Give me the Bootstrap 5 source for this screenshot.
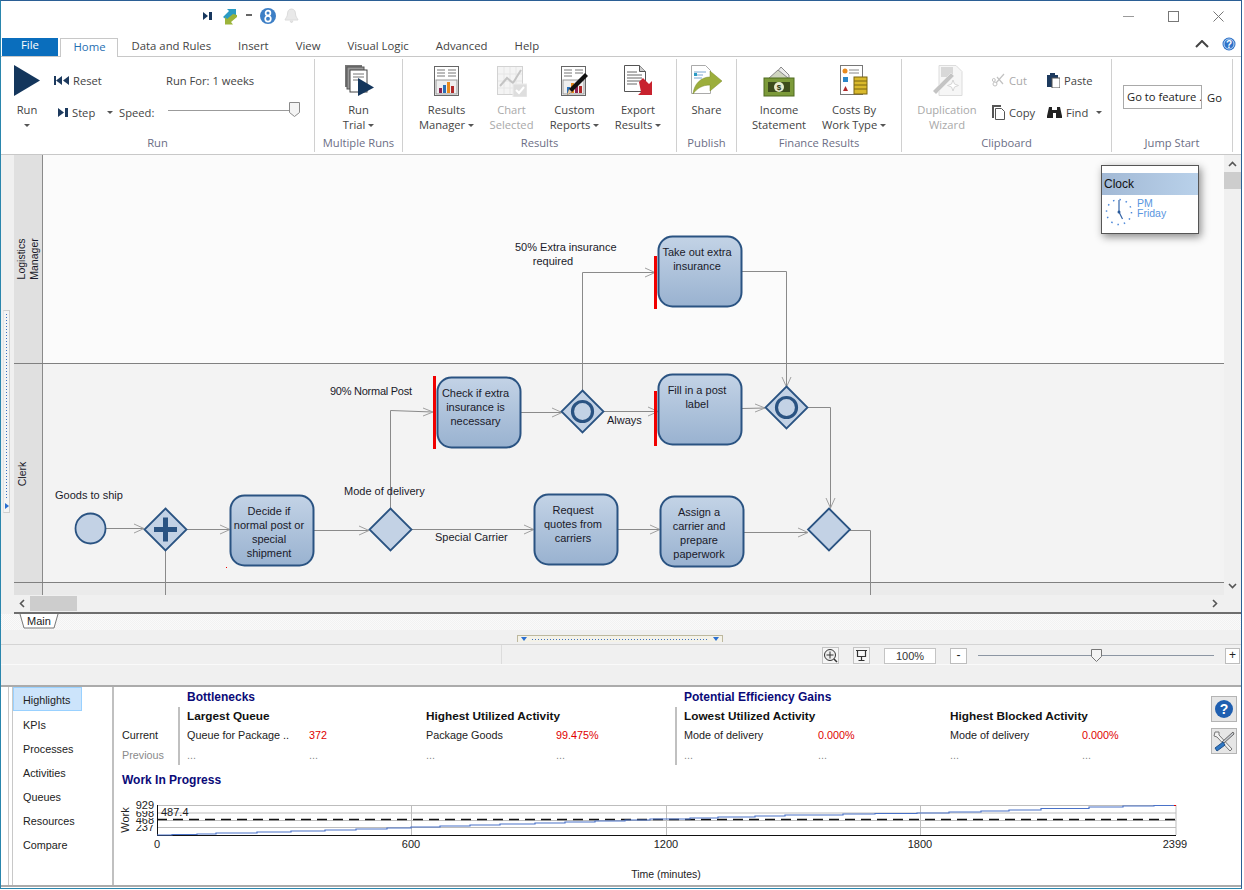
<!DOCTYPE html>
<html lang="en">
<head>
<meta charset="UTF-8">
<meta name="viewport" content="width=device-width, initial-scale=1.0">
<title>Process Simulator - Home</title>
<link href="https://cdn.jsdelivr.net/npm/bootstrap@5.3.6/dist/css/bootstrap.min.css" rel="stylesheet">
<style>
html,body{margin:0;background:#fff;overflow:hidden}
.app{width:1242px;height:889px;border-top:1px solid #2b5f95;border-left:1px solid #2a86ad;border-right:1px solid #2b5f95;border-bottom:1px solid #2a86ad;background:#fff;font:11.2px/15px "Open Sans",sans-serif;color:#444}
.titlebar{height:37px;padding:0 0 7px 201px}
.qa-item{margin-right:8px}
.win-ctl{margin-left:auto;padding-right:17px;gap:34px}
.tabrow{height:19px;border-bottom:1px solid #c8c8c8;padding-left:1px;font-size:11.35px}
.tab-file{width:56px;height:18px;background:#0a6ebd;color:#fff;text-align:center;line-height:13px;margin-right:2px}
.tab-item{padding:0 13.5px;line-height:15px;height:19px;white-space:nowrap}
.tab-on{color:#1f6fb2;background:#fff;border:1px solid #c8c8c8;border-bottom:0;padding:0 12.5px;width:58px}
.tab-right{margin-left:auto;padding:0 5px 7px 0;gap:13px;height:18px}
.ribbon{height:98px;border-bottom:1px solid #c8c8c8}
.rb-group{position:relative;flex:none;display:flex;flex-direction:column;height:93px;margin-top:2px;border-right:1px solid #d0d0d0}
.rb-body{flex:1;display:flex;padding-top:5px;min-height:0}
.rb-label{height:18px;line-height:18px;text-align:center;color:#6c6e85}
.w-run{width:314px}.w-multi{width:88px}.w-res{width:274px}.w-pub{width:60px}.w-fin{width:165px}.w-clip{width:210px}.w-jump{width:121px}
.big-btn{flex:none;display:flex;flex-direction:column;align-items:center;text-align:center;white-space:nowrap}
.big-btn svg{display:block;height:33px;margin-bottom:5px}
.bw-run{width:34px;margin-left:9px;margin-right:10px}.bw-full{width:100%}
.bw-63{width:63px;margin-left:12px}.bw-67{width:67px}.bw-59{width:59px}.bw-68{width:68px}
.bw-84{width:84px}.bw-66{width:66px}.bw-90{width:90px}
.faded{color:#a9a9a9}
.rb-caret{display:inline-block;width:0;height:0;border-left:3px solid transparent;border-right:3px solid transparent;border-top:3px solid #555;vertical-align:2px}
.rb-rows{display:flex;flex-direction:column}
.rb-row{height:32px;display:flex;align-items:center;white-space:nowrap}
.cell-a{width:112px}.cell-b{width:65px}.cell-c{width:49px}
.speed-track{position:relative;width:132px;height:1px;background:#9b9b9b;margin-top:-4px}
.speed-thumb{position:absolute;right:0;top:-8px}
.small-grid{display:grid;grid-template-columns:55px 62px;grid-auto-rows:32px;white-space:nowrap}
.small-btn{display:flex;align-items:center;gap:4px}
.small-btn svg{flex:none}
.jump-box{margin:21px 0 0 11px;display:flex;align-items:center;align-self:flex-start;color:#222}
.jump-input{width:79px;height:24px;border:1px solid #a9a9a9;line-height:22px;padding-left:3px;margin-right:5px;white-space:nowrap;overflow:hidden}
.mid-row{height:459px}
.gutter{width:13px;background:#f0f0f0;position:relative}
.gutter-grip{position:absolute;left:2px;top:155px;width:7px;height:203px;border:1px solid #cfcfcf;border-left-color:#e4e4e4;background:#f4f4f4;display:flex;flex-direction:column;align-items:center;justify-content:space-between;padding:3px 0}
.grip-vdots{width:1px;flex:1;margin:0 0 3px;background:repeating-linear-gradient(180deg,#3a6fc0 0 1px,transparent 1px 3px)}
.grip-rtri{width:0;height:0;border-top:3px solid transparent;border-bottom:3px solid transparent;border-left:4px solid #2a6fd0}
.canvas-wrap{position:relative;width:1227px}
.canvas-top{display:flex;height:440px}
.canvas-svg{display:block;width:1210px;height:440px;font-family:"Liberation Sans",sans-serif;font-size:11px;fill:#1a1a2a}
.vbar{width:17px;background:#f0f0f0;position:relative}
.vbar-thumb{position:absolute;left:0;top:17px;width:17px;height:17px;background:#cdcdcd}
.sb-arrow{position:absolute}
.sb-up{left:4px;top:6px}
.sb-down{left:4px;top:428px}
.sb-left{left:5px;top:4px}
.sb-right{left:1198px;top:4px}
.hbar{height:19px;background:#f0f0f0;border-bottom:2px solid #6e6e6e;position:relative}
.hbar-thumb{position:absolute;left:16px;top:1px;width:47px;height:15px;background:#cdcdcd}
.clock-win{position:absolute;left:1087px;top:10px;width:98px;height:69px;background:#fff;border:1px solid #555;box-shadow:2px 3px 8px rgba(0,0,0,.45);padding-top:7px}
.clock-head{height:22px;background:linear-gradient(90deg,#a2b9d5,#b9d1ea);font:12px/22px "Liberation Sans",sans-serif;color:#111;padding-left:2px}
.clock-body{display:flex;gap:4px;padding:3px 0 0 3px;color:#5b96e0;font:10.5px/10px "Liberation Sans",sans-serif}
.sheet-strip{height:16px;padding-left:13px;background:repeating-conic-gradient(#f2f2f2 0 25%,#fafafa 0 50%) 0 0/2px 2px}
.sheet-tab{display:block}
.grip-row{height:14px;background:#f0f0f0;display:flex;justify-content:center;align-items:flex-end;padding-right:2px}
.grip-box{width:206px;height:7px;border:1px solid #bdb89e;border-bottom:0;background:#f4f2e8;display:flex;justify-content:space-between;align-items:center;padding:0 3px;margin-bottom:2px}
.grip-dots{flex:1;height:1px;margin:0 5px;background:repeating-linear-gradient(90deg,#3a6fc0 0 1px,transparent 1px 3px)}
.grip-tri{width:0;height:0;border-left:3px solid transparent;border-right:3px solid transparent;border-top:4px solid #2a6fd0}
.zoom-row{height:21px;background:#f0f0f0;border-top:1px solid #d4d4d4;border-bottom:1px solid #fafafa;justify-content:flex-end;padding:2px 1px 0 0}
.zoom-sep{position:absolute;left:500px;top:0;height:19px;border-left:1px solid #dcdcdc}
.zoom-btn{width:17px;height:16px;border:1px solid #bdbdbd;background:#fff;text-align:center;font:12px/13px "Liberation Sans",sans-serif;color:#222;flex:none}
.zoom-plus{width:15px}
.zoom-icon{width:17px;height:17px;border:1px solid #c4c4c4;background:#f6f6f6;flex:none;display:flex;align-items:center;justify-content:center}
.zoom-pct{width:52px;height:16px;background:#fff;border:1px solid #c4c4c4;text-align:center;font:11px/14px "Liberation Sans",sans-serif;color:#333;flex:none}
.zoom-track{position:relative;width:236px;height:1px;background:#8c96a3;flex:none}
.zoom-thumb{position:absolute;left:113px;top:-6px}
.zg{margin-left:14px}
.zs{margin-left:11px}
.gap-row{height:20px;background:#f0f0f0}
.bottom-panel{height:202px;border-top:2px solid #ababab;border-bottom:2px solid #ababab;font:10.8px/14px "Liberation Sans",sans-serif;color:#222;padding-left:11px;background:#fff}
.side-nav{width:102px;border-right:2px solid #c0c0c0;border-left:1px solid #c8c8c8;box-shadow:-3px 0 0 #fff,-4px 0 0 #c8c8c8;flex:none}
.side-item{height:24px;line-height:24px;padding-left:10px}
.side-on{width:69px;background:#cce4fb;border:1px solid #99d1ff;padding-left:9px;line-height:25px;margin-bottom:2px}
.hl-area{position:relative;flex:1}
.hl-grid{display:grid;grid-template-columns:56px 131px 117px 130px 119px 143px 132px 132px 100px;grid-template-rows:20px 19px 20px 19px;padding-left:8px;white-space:nowrap}
.hl-title{color:#0a0a78;font-weight:700;line-height:20px;font-size:12px;padding-left:9px}
.hl-bold{font-weight:700;color:#111;font-size:11.8px;line-height:19px}
.hl-cell{line-height:19px}
.hl-sep{border-left:2px solid #c0c0c0;padding-left:7px}
.hl-val{color:#e00000}
.hl-prev{color:#8a8a8a}
.wip-title{padding-left:8px;margin-top:6px;color:#0a0a78;font-weight:700;font-size:12px;line-height:18px}
.chart-svg{position:absolute;left:0;top:99px;width:1110px;height:100px;font-family:"Liberation Sans",sans-serif;font-size:11px;fill:#222}
.side-tools{position:absolute;right:4px;top:9px;display:flex;flex-direction:column;gap:6px}
.tool-btn{width:26px;height:26px;border:1px solid #b4b4b4;background:#e6e6e6;display:flex;align-items:center;justify-content:center}
</style>
</head>
<body>
<div class="app d-flex flex-column">

  <!-- title bar -->
  <div class="titlebar d-flex align-items-center">
    <svg class="qa-item" width="12" height="12" viewBox="0 0 12 12"><path d="M1 2v8l5-4zM7 2h3v8H7z" fill="#17375e"/></svg>
    <svg class="qa-item" width="16" height="17" viewBox="0 0 16 17"><path d="M1 9l6-6-2-2h9v8l-2-2-6 6z" fill="#2a9bc4"/><path d="M15 7v2l-6 5 2 2.500H3V9l2 2 6-5z" fill="#9cb43a"/></svg>
    <svg class="qa-item" width="6" height="4" viewBox="0 0 6 4"><path d="M0 0h6v2H0z" fill="#666"/></svg>
    <svg class="qa-item" width="16" height="16" viewBox="0 0 16 16"><circle cx="8" cy="8" r="8" fill="#3d7fc6"/><circle cx="8" cy="5" r="2.400" fill="none" stroke="#fff" stroke-width="1.700"/><circle cx="8" cy="10.800" r="2.800" fill="none" stroke="#fff" stroke-width="1.700"/></svg>
    <svg width="15" height="16" viewBox="0 0 15 16"><path d="M7.500 1c3 0 4 2.500 4 5 0 3 2 4 2.500 6H1c.5-2 2.500-3 2.500-6 0-2.500 1-5 4-5zM6 13h3l-1.500 2z" fill="#e9e9e9" stroke="#dcdcdc"/></svg>
    <div class="win-ctl d-flex align-items-center">
      <svg width="11" height="11" viewBox="0 0 11 11"><path d="M0 5.500h11" stroke="#9a9a9a"/></svg>
      <svg width="11" height="11" viewBox="0 0 11 11"><rect x=".5" y=".5" width="10" height="10" fill="none" stroke="#777"/></svg>
      <svg width="11" height="11" viewBox="0 0 11 11"><path d="M.5.500l10 10M10.500.500l-10 10" stroke="#777"/></svg>
    </div>
  </div>

  <!-- tabs -->
  <div class="tabrow d-flex">
    <div class="tab-file">File</div>
    <div class="tab-item tab-on">Home</div>
    <div class="tab-item">Data and Rules</div>
    <div class="tab-item">Insert</div>
    <div class="tab-item">View</div>
    <div class="tab-item">Visual Logic</div>
    <div class="tab-item">Advanced</div>
    <div class="tab-item">Help</div>
    <div class="tab-right d-flex align-items-center">
      <svg width="14" height="8" viewBox="0 0 14 8"><path d="M1 7l6-6 6 6" fill="none" stroke="#444" stroke-width="2"/></svg>
      <svg width="14" height="14" viewBox="0 0 14 14"><circle cx="7" cy="7" r="6.500" fill="#2e72c8"/><circle cx="7" cy="7" r="5" fill="none" stroke="#bcd6f4"/><text x="7" y="10.500" text-anchor="middle" font-family="Liberation Sans" font-weight="700" font-size="10" fill="#fff">?</text></svg>
    </div>
  </div>

  <!-- ribbon -->
  <div class="ribbon d-flex">
    <div class="rb-group w-run">
      <div class="rb-body">
        <div class="big-btn bw-run">
          <svg width="28" height="33" viewBox="0 0 28 33"><path d="M1 1l26 15.500L1 32z" fill="#14365c"/></svg>
          <div>Run</div><div><span class="rb-caret"></span></div>
        </div>
        <div class="rb-rows">
          <div class="rb-row">
            <div class="cell-a d-flex align-items-center gap-1">
              <svg width="15" height="9" viewBox="0 0 15 9"><path d="M0 0h2v9H0zM8 0v9L2 4.500zM15 0v9L9 4.500z" fill="#1d3a5e"/></svg><span>Reset</span>
            </div>
            <div>Run For: 1 weeks</div>
          </div>
          <div class="rb-row">
            <div class="cell-b d-flex align-items-center gap-1 ps-1">
              <svg width="10" height="9" viewBox="0 0 10 9"><path d="M0 0l6 4.500L0 9zM7 0h3v9H7z" fill="#1d3a5e"/></svg><span>Step</span><span class="rb-caret ms-2"></span>
            </div>
            <div class="cell-c">Speed:</div>
            <div class="speed-track">
              <svg class="speed-thumb" width="11" height="15" viewBox="0 0 11 15"><path d="M.5.500h10v10l-5 4-5-4z" fill="#f4f4f4" stroke="#8a8a8a"/></svg>
            </div>
          </div>
        </div>
      </div>
      <div class="rb-label">Run</div>
    </div>

    <div class="rb-group w-multi">
      <div class="rb-body">
        <div class="big-btn bw-full">
          <svg width="30" height="33" viewBox="0 0 30 33">
            <rect x="1" y="1" width="17" height="22" fill="#777"/><rect x="3" y="3" width="17" height="22" fill="#999" stroke="#555"/><rect x="6" y="6" width="17" height="22" fill="#fff" stroke="#444"/>
            <path d="M9 10h11M9 13h11M9 16h7" stroke="#777"/><path d="M14 14l16 9.500L14 32z" fill="#14365c"/>
          </svg>
          <div>Run</div><div>Trial <span class="rb-caret"></span></div>
        </div>
      </div>
      <div class="rb-label">Multiple Runs</div>
    </div>

    <div class="rb-group w-res">
      <div class="rb-body">
        <div class="big-btn bw-63">
          <svg width="26" height="33" viewBox="0 0 26 33">
            <rect x=".5" y="2.500" width="24" height="29" fill="#fff" stroke="#666"/><path d="M3 6h8M14 6h8M3 9h8M14 9h8M3 12h8M14 12h8" stroke="#777"/>
            <rect x="2" y="16" width="21" height="14" fill="#efefef" stroke="#999"/>
            <rect x="5" y="24" width="3" height="5" fill="#8d2252"/><rect x="9" y="21" width="3" height="8" fill="#2a70b8"/><rect x="13" y="18" width="3" height="11" fill="#e88a1e"/><rect x="17" y="22" width="3" height="7" fill="#b02a2a"/>
          </svg>
          <div>Results</div><div>Manager <span class="rb-caret"></span></div>
        </div>
        <div class="big-btn bw-67 faded">
          <svg width="30" height="33" viewBox="0 0 30 33">
            <rect x=".5" y="2.500" width="25" height="28" fill="#f4f4f4" stroke="#d2d2d2"/><path d="M7 3v27M13 3v27M19 3v27M1 10h24M1 17h24M1 24h24" stroke="#e6e6e6"/>
            <path d="M3 22l7-8 6 5 8-13" fill="none" stroke="#c4c4c4" stroke-width="2"/><rect x="16" y="20" width="14" height="13" fill="#dedede" stroke="#ececec"/><path d="M19 26l3 3 5-6" fill="none" stroke="#fff" stroke-width="2"/>
          </svg>
          <div>Chart</div><div>Selected</div>
        </div>
        <div class="big-btn bw-59">
          <svg width="28" height="33" viewBox="0 0 28 33">
            <rect x=".5" y="2.500" width="24" height="29" fill="#fff" stroke="#666"/><path d="M3 6h8M14 6h8M3 9h8M14 9h8M3 12h8" stroke="#777"/>
            <rect x="2" y="16" width="21" height="14" fill="#efefef" stroke="#999"/>
            <rect x="6" y="23" width="3" height="6" fill="#2a70b8"/><rect x="10" y="19" width="3" height="10" fill="#e88a1e"/><rect x="14" y="21" width="3" height="8" fill="#8d2252"/><rect x="18" y="22" width="3" height="7" fill="#b02a2a"/>
            <path d="M6 31l2-6L24 9l3 3-16 16z" fill="#111"/><path d="M6 31l2-6 3 3z" fill="#e8c9a0"/>
          </svg>
          <div>Custom</div><div>Reports <span class="rb-caret"></span></div>
        </div>
        <div class="big-btn bw-68">
          <svg width="28" height="33" viewBox="0 0 28 33">
            <path d="M.5 1.500h15l6 6v20H.5z" fill="#fff" stroke="#555"/><path d="M15.500 1.500v6h6" fill="#ccc" stroke="#555"/><path d="M3 8h10M3 11h15M3 14h15M3 17h15M3 20h10" stroke="#666"/>
            <path d="M14 19l4-4 6 6 3-3v14H13l3-3z" fill="#c8222e" transform="translate(1 -1)"/>
          </svg>
          <div>Export</div><div>Results <span class="rb-caret"></span></div>
        </div>
      </div>
      <div class="rb-label">Results</div>
    </div>

    <div class="rb-group w-pub">
      <div class="rb-body">
        <div class="big-btn bw-full">
          <svg width="32" height="33" viewBox="0 0 32 33">
            <path d="M.5 1.500h14l5 5v23H.5z" fill="#fff" stroke="#aaa"/><path d="M3 8h12M3 11h9M3 14h8" stroke="#7aa6d0"/><rect x="3" y="9" width="3" height="3" fill="#2a9bc4"/>
            <path d="M2 30c1-10 8-17 17-17V7l12 10-12 10v-6C12 21 6 24 2 30z" fill="#9cae3c" stroke="#7a8a2a" stroke-width=".5"/>
          </svg>
          <div>Share</div>
        </div>
      </div>
      <div class="rb-label">Publish</div>
    </div>

    <div class="rb-group w-fin">
      <div class="rb-body">
        <div class="big-btn bw-84">
          <svg width="32" height="33" viewBox="0 0 32 33">
            <path d="M8 15L18 3l8 8v6z" fill="#ececec" stroke="#888"/><path d="M5 15l10-9 10 8v3z" fill="#cfd5c0" stroke="#888"/>
            <rect x="1" y="14" width="30" height="18" fill="#7c9a3a" stroke="#4f6a1e"/><rect x="5" y="18" width="22" height="10" fill="#3d4d1c"/><circle cx="16" cy="23" r="5" fill="#e7eccf"/><text x="16" y="26" text-anchor="middle" font-family="Liberation Sans" font-weight="700" font-size="8" fill="#2a3510">$</text>
          </svg>
          <div>Income</div><div>Statement</div>
        </div>
        <div class="big-btn bw-66">
          <svg width="28" height="33" viewBox="0 0 28 33">
            <rect x=".5" y="1.500" width="22" height="29" fill="#fff" stroke="#777"/><circle cx="5" cy="7" r="2.500" fill="#e88a1e"/><path d="M9 6h10M9 9h10" stroke="#888"/><rect x="3" y="13" width="5" height="5" fill="#2a86c8"/><path d="M3 27l2.500-5 2.500 5z" fill="#b02a2a"/>
            <rect x="14" y="13" width="13" height="17" fill="#d9b92c" stroke="#7a6510"/><path d="M14 17h13M14 21h13M14 25h13" stroke="#7a6510"/>
          </svg>
          <div>Costs By</div><div>Work Type <span class="rb-caret"></span></div>
        </div>
      </div>
      <div class="rb-label">Finance Results</div>
    </div>

    <div class="rb-group w-clip">
      <div class="rb-body">
        <div class="big-btn bw-90 faded">
          <svg width="32" height="33" viewBox="0 0 32 33">
            <path d="M8 1.500h17l6 6v24H8z" fill="#f6f6f6" stroke="#dcdcdc"/><rect x="10" y="3" width="12" height="10" fill="#d8d8d8"/>
            <path d="M2 27L20 9l3 3L5 30z" fill="#c4c4c4" stroke="#e2e2e2"/><path d="M22 16l1.500 4 4 1.500-4 1.500-1.500 4-1.500-4-4-1.500 4-1.500z" fill="#fff" stroke="#d6d6d6"/>
          </svg>
          <div>Duplication</div><div>Wizard</div>
        </div>
        <div class="small-grid">
          <div class="small-btn faded">
            <svg width="13" height="14" viewBox="0 0 13 14"><path d="M12 1L4 10M11 11L5 4" stroke="#c2c2c2" stroke-width="1.200" fill="none"/><circle cx="3" cy="11" r="2" fill="none" stroke="#c2c2c2"/><circle cx="1.800" cy="7" r="1.500" fill="none" stroke="#c2c2c2"/></svg>
            <span>Cut</span>
          </div>
          <div class="small-btn">
            <svg width="13" height="15" viewBox="0 0 13 15"><rect x="0" y="2" width="11" height="12" fill="#1d3a5e"/><rect x="3" y="0" width="5" height="4" fill="#1d3a5e"/><rect x="5" y="5" width="8" height="10" fill="#fff" stroke="#555"/></svg>
            <span>Paste</span>
          </div>
          <div class="small-btn">
            <svg width="13" height="15" viewBox="0 0 13 15"><path d="M0 0h9v2H2v11H0z" fill="#555"/><path d="M3.500 3.500h6l3 3v8h-9z" fill="#fff" stroke="#555"/></svg>
            <span>Copy</span>
          </div>
          <div class="small-btn">
            <svg width="15" height="12" viewBox="0 0 15 12"><path d="M2 1h3v3h5V1h3l2 9v2H9V7H6v5H0v-2z" fill="#222"/></svg>
            <span>Find</span><span class="rb-caret ms-1"></span>
          </div>
        </div>
      </div>
      <div class="rb-label">Clipboard</div>
    </div>

    <div class="rb-group w-jump">
      <div class="rb-body">
        <div class="jump-box">
          <div class="jump-input">Go to feature .</div><span>Go</span>
        </div>
      </div>
      <div class="rb-label">Jump Start</div>
    </div>
  </div>

  <!-- process canvas -->
  <div class="mid-row d-flex">
    <div class="gutter">
      <div class="gutter-grip"><span class="grip-vdots"></span><span class="grip-rtri"></span></div>
    </div>
    <div class="canvas-wrap">
      <div class="canvas-top">
        <svg class="canvas-svg" viewBox="14 155 1210 440">
          <defs>
            <linearGradient id="taskFill" x1="0" y1="0" x2="0" y2="1"><stop offset="0" stop-color="#c3d3e6"/><stop offset="1" stop-color="#99b2d0"/></linearGradient>
          </defs>
          <!-- lanes -->
          <rect x="14" y="155" width="1210" height="208" fill="#fbfbfb"/>
          <rect x="14" y="364" width="1210" height="218" fill="#f3f3f3"/>
          <rect x="14" y="583" width="1210" height="12" fill="#ebebeb"/>
          <rect x="14" y="155" width="29" height="440" fill="#e0e0e0"/>
          <path d="M13.500 155v440M42.500 155v440" stroke="#8a8a8a" fill="none"/>
          <path d="M14 363.500h1210M14 582.500h1210" stroke="#808080" fill="none"/>
          <text transform="translate(25 259) rotate(-90)" text-anchor="middle" font-size="10.500">Logistics</text>
          <text transform="translate(38 259) rotate(-90)" text-anchor="middle" font-size="10.500">Manager</text>
          <text transform="translate(26 474) rotate(-90)" text-anchor="middle" font-size="10.500">Clerk</text>
          <!-- edges -->
          <g fill="none" stroke="#8a8a8a" stroke-width="1">
            <path d="M106 528.500h38M165.500 551v44M187 529.500h43M314 530.500h55M390.500 508.500V410.500l42 1.500M411.500 529.500h122M521 412.500h41M582.500 390V272.500h71.500M603.500 411.500h54M742 271.500h44.500V387M742 408.500l23-.5M807 407.500h23.500V508.500M618 529.500h42M744 532.500h64M850 530.500h20.500V595"/>
          </g>
          <g fill="none" stroke="#a0a0a0" stroke-width="1">
            <path d="M134 524l10 4.500-10 4.500M220 525l10 4.500-10 4.500M359 526l10 4.500-10 4.500M423 408l10 4-10 4M524 525l10 4.500-10 4.500M552 408l10 4.500-10 4.500M645 268l10 4.500-10 4.500M648 407l10 4.500-10 4.500M782 377l4.500 10 4.500-10M755 404l10 4-10 4M826 498l4.500 10 4.500-10M650 525l10 4.500-10 4.500M798 528l10 4.500-10 4.500"/>
          </g>
          <!-- red bars -->
          <g fill="#f00000">
            <rect x="654" y="256" width="3" height="53"/>
            <rect x="433" y="376" width="3" height="73"/>
            <rect x="654" y="391" width="3" height="55"/>
            <rect x="226" y="567" width="1" height="1"/>
          </g>
          <!-- tasks -->
          <g fill="url(#taskFill)" stroke="#2a5382" stroke-width="2">
            <rect x="658.500" y="236.500" width="83" height="70" rx="14"/>
            <rect x="437.500" y="377.500" width="83" height="70" rx="14"/>
            <rect x="658.500" y="374.500" width="83" height="70" rx="14"/>
            <rect x="230.500" y="495.500" width="83" height="70" rx="14"/>
            <rect x="534.500" y="494.500" width="83" height="70" rx="14"/>
            <rect x="660.500" y="496.500" width="83" height="70" rx="14"/>
          </g>
          <!-- events and gateways -->
          <g fill="#c3d2e5" stroke="#2a5382" stroke-width="1.800">
            <circle cx="90.500" cy="528.500" r="15"/>
            <path d="M165.500 508.500l21 21-21 21-21-21z"/>
            <path d="M390.500 508.500l21 21-21 21-21-21z"/>
            <path d="M582.500 390.500l21 21-21 21-21-21z"/>
            <path d="M786.500 386.500l21 21-21 21-21-21z"/>
            <path d="M829 508.500l21 21-21 21-21-21z"/>
          </g>
          <path d="M165.500 517.500v24M154 529.500h23" stroke="#2a5382" stroke-width="5" fill="none"/>
          <circle cx="582.500" cy="411.500" r="10" fill="none" stroke="#2a5382" stroke-width="3.200"/>
          <circle cx="786.500" cy="407.500" r="10" fill="none" stroke="#2a5382" stroke-width="3.200"/>
          <!-- task text -->
          <g text-anchor="middle">
            <text x="697" y="256">Take out extra</text><text x="697" y="270">insurance</text>
            <text x="475.500" y="397">Check if extra</text><text x="475.500" y="411">insurance is</text><text x="475.500" y="425">necessary</text>
            <text x="697" y="394">Fill in a post</text><text x="697" y="408">label</text>
            <text x="269" y="515">Decide if</text><text x="269" y="529">normal post or</text><text x="269" y="543">special</text><text x="269" y="557">shipment</text>
            <text x="573" y="514">Request</text><text x="573" y="528">quotes from</text><text x="573" y="542">carriers</text>
            <text x="699" y="516">Assign a</text><text x="699" y="530">carrier and</text><text x="699" y="544">prepare</text><text x="699" y="558">paperwork</text>
            <text x="553" y="265">required</text>
          </g>
          <text x="515" y="251">50% Extra insurance</text>
          <text x="330" y="395" textLength="82">90% Normal Post</text>
          <text x="55" y="499">Goods to ship</text>
          <text x="344" y="495">Mode of delivery</text>
          <text x="435" y="541">Special Carrier</text>
          <text x="607" y="424">Always</text>
        </svg>
        <div class="vbar">
          <svg class="sb-arrow sb-up" width="9" height="6" viewBox="0 0 9 6"><path d="M1 5l3.500-3.500L8 5" fill="none" stroke="#555" stroke-width="1.600"/></svg>
          <div class="vbar-thumb"></div>
          <svg class="sb-arrow sb-down" width="9" height="6" viewBox="0 0 9 6"><path d="M1 1l3.500 3.500L8 1" fill="none" stroke="#555" stroke-width="1.600"/></svg>
        </div>
      </div>
      <div class="hbar">
        <svg class="sb-arrow sb-left" width="6" height="9" viewBox="0 0 6 9"><path d="M5 1L1.500 4.500 5 8" fill="none" stroke="#555" stroke-width="1.600"/></svg>
        <div class="hbar-thumb"></div>
        <svg class="sb-arrow sb-right" width="6" height="9" viewBox="0 0 6 9"><path d="M1 1l3.500 3.500L1 8" fill="none" stroke="#555" stroke-width="1.600"/></svg>
      </div>
      <div class="clock-win">
        <div class="clock-head">Clock</div>
        <div class="clock-body">
          <svg width="28" height="28" viewBox="0 0 28 28">
            <circle cx="14" cy="14" r="12.500" fill="none" stroke="#4a86d8" stroke-width="1.500" stroke-dasharray="1.500 5.050"/>
            <path d="M14 14V2M14 14l3.500 7" stroke="#3566a8" stroke-width="1.200" fill="none"/><circle cx="14" cy="14" r="1.500" fill="#2a5a9a"/>
          </svg>
          <div>PM<br>Friday</div>
        </div>
      </div>
    </div>
  </div>

  <!-- sheet tabs -->
  <div class="sheet-strip">
    <svg class="sheet-tab" width="48" height="16" viewBox="0 0 48 16"><path d="M6 0l4 14h30l4-14" fill="#fff" stroke="#777"/><text x="25" y="11" text-anchor="middle" font-family="Liberation Sans" font-size="11" fill="#222">Main</text></svg>
  </div>
  <div class="grip-row"><div class="grip-box"><span class="grip-tri"></span><span class="grip-dots"></span><span class="grip-tri"></span></div></div>

  <!-- zoom bar -->
  <div class="zoom-row d-flex align-items-center position-relative">
    <span class="zoom-sep"></span>
    <div class="zoom-icon"><svg width="15" height="15" viewBox="0 0 15 15"><circle cx="7" cy="7" r="5.500" fill="#eee" stroke="#333"/><path d="M7 3.500v7M3.500 7h7" stroke="#333"/><path d="M11 11l3 3" stroke="#333" stroke-width="1.500"/></svg></div>
    <div class="zoom-icon zg"><svg width="13" height="13" viewBox="0 0 13 13"><path d="M1 1.500h11M2.500 1.500v6h8v-6M6.500 7.500v4M3.500 11.500h6" fill="none" stroke="#333" stroke-width="1.200"/></svg></div>
    <div class="zoom-pct zg">100%</div>
    <div class="zoom-btn zg">-</div>
    <div class="zoom-track zs"><svg class="zoom-thumb" width="11" height="13" viewBox="0 0 11 13"><path d="M.5.500h10v7l-5 5-5-5z" fill="#f4f4f4" stroke="#777"/></svg></div>
    <div class="zoom-btn zoom-plus zs">+</div>
  </div>
  <div class="gap-row"></div>

  <!-- highlights panel -->
  <div class="bottom-panel d-flex">
    <div class="side-nav">
      <div class="side-item side-on">Highlights</div>
      <div class="side-item">KPIs</div>
      <div class="side-item">Processes</div>
      <div class="side-item">Activities</div>
      <div class="side-item">Queues</div>
      <div class="side-item">Resources</div>
      <div class="side-item">Compare</div>
    </div>
    <div class="hl-area">
      <div class="hl-grid">
        <div></div><div class="hl-title">Bottlenecks</div><div></div><div></div><div></div><div class="hl-title">Potential Efficiency Gains</div><div></div><div></div><div></div>

        <div></div><div class="hl-sep hl-bold">Largest Queue</div><div></div><div class="hl-bold">Highest Utilized Activity</div><div></div><div class="hl-sep hl-bold">Lowest Utilized Activity</div><div></div><div class="hl-bold">Highest Blocked Activity</div><div></div>

        <div class="hl-cell">Current</div><div class="hl-sep hl-cell">Queue for Package ..</div><div class="hl-cell hl-val">372</div><div class="hl-cell">Package Goods</div><div class="hl-cell hl-val">99.475%</div><div class="hl-sep hl-cell">Mode of delivery</div><div class="hl-cell hl-val">0.000%</div><div class="hl-cell">Mode of delivery</div><div class="hl-cell hl-val">0.000%</div>

        <div class="hl-cell hl-prev">Previous</div><div class="hl-sep hl-cell hl-prev">...</div><div class="hl-cell hl-prev">...</div><div class="hl-cell hl-prev">...</div><div class="hl-cell hl-prev">...</div><div class="hl-sep hl-cell hl-prev">...</div><div class="hl-cell hl-prev">...</div><div class="hl-cell hl-prev">...</div><div class="hl-cell hl-prev">...</div>
      </div>
      <div class="wip-title">Work In Progress</div>
      <svg class="chart-svg" viewBox="114 786 1110 100">
        <path d="M157 805.500h1019M157 813h1019M157 820.500h1019M157 827.500h1019M411.500 805v30M666.500 805v30M920.500 805v30M1176 805v30" stroke="#bdbdbd" fill="none"/>
        <path d="M157.500 805v31M157 835.500h1019" stroke="#111" fill="none"/>
        <path d="M157 819.500h1019" stroke="#111" stroke-width="1.500" stroke-dasharray="10 6" fill="none"/>
        <path d="M157 835H172V834.500H197V834H216V833H257V832H291V831H325V830H356V829H387V828H411V827H440V826H470V825H500V824H535V823H565V822H595V821H625V820H650V819H690V818H718V817H755V816H785V815H843V814H875V813.500H917V813H949V812H981V811H1009V810H1041V808.500H1089V807H1123V806H1154V805.500H1176" fill="none" stroke="#4a72c8" stroke-width="1.200"/>
        <rect x="1174" y="805" width="2" height="1" fill="#e00000"/>
        <text x="161" y="816">487.4</text>
        <text x="154" y="831" text-anchor="end">237</text>
        <rect x="134" y="815" width="21" height="10" fill="#fff"/>
        <text x="154" y="824" text-anchor="end">468</text>
        <rect x="134" y="808" width="21" height="10" fill="#fff"/>
        <text x="154" y="817" text-anchor="end">698</text>
        <rect x="134" y="799" width="21" height="12" fill="#fff"/>
        <text x="154" y="809" text-anchor="end">929</text>
        <text transform="translate(129 820) rotate(-90)" text-anchor="middle">Work</text>
        <text x="157" y="848" text-anchor="middle">0</text>
        <text x="411" y="848" text-anchor="middle">600</text>
        <text x="666" y="848" text-anchor="middle">1200</text>
        <text x="920" y="848" text-anchor="middle">1800</text>
        <text x="1175" y="848" text-anchor="middle">2399</text>
        <text x="666" y="878" text-anchor="middle" font-size="10.500">Time (minutes)</text>
      </svg>
      <div class="side-tools">
        <div class="tool-btn"><svg width="20" height="20" viewBox="0 0 20 20"><circle cx="10" cy="10" r="9" fill="#1f5fb0"/><text x="10" y="15" text-anchor="middle" font-family="Liberation Sans" font-weight="700" font-size="14" fill="#fff">?</text></svg></div>
        <div class="tool-btn"><svg width="24" height="24" viewBox="0 0 24 24"><path d="M3 3l4 0 0 3 13 14-2 2L5 8 2 7z" fill="#f2f2f2" stroke="#777"/><path d="M21 3L10 13l1.500 1.500L22 5z" fill="#c8ccd2" stroke="#666"/><path d="M11 13l-8 6 2 3 8-6z" fill="#2f78c4" stroke="#1f4f88"/></svg></div>
      </div>
    </div>
  </div>
</div>
<script src="https://cdn.jsdelivr.net/npm/bootstrap@5.3.6/dist/js/bootstrap.bundle.min.js"></script>
</body>
</html>
